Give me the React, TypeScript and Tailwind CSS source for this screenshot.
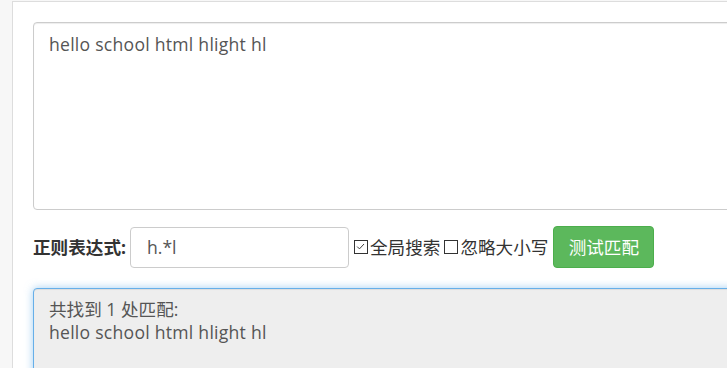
import React from "react";

export default function App() {
  const font = { fontFamily: '"Microsoft YaHei", "Open Sans", "Noto Sans CJK SC", sans-serif' };
  return (
    <div className="flex h-[368px] w-[727px] overflow-hidden bg-[#f7f7f7]" style={font}>
      <div className="ml-[12px] mt-[1px] flex-1 min-w-0 border-l border-t border-[#dddddd] bg-white pl-[20px] pt-[20px]">
        <div className="w-[720px] h-[188px] rounded-[4px] border border-[#cccccc] px-[15px] pt-[9px] text-[17.6px] leading-[24px] tracking-[0.25px] text-[#555555] shadow-[inset_0_1px_1px_rgba(0,0,0,0.075)]">
          hello school html hlight hl
        </div>
        <div className="mt-[16px] flex items-center h-[42px]">
          <span className="text-[17.6px] font-bold text-[#333333] mr-[4px]">正则表达式:</span>
          <div className="w-[219px] h-[41px] rounded-[4px] border border-[#cccccc] px-[16px] flex items-center text-[17.6px] text-[#555555]">
            h.*l
          </div>
          <span className="ml-[5px] flex items-center text-[17.6px] text-[#333333]">
            <span className="inline-block w-[14px] h-[14px] border border-[#333] relative mr-[2px]">
              <svg viewBox="0 0 14 14" className="absolute inset-0 w-[12px] h-[12px]">
                <path d="M2.5 6.5 L5.2 9.2 L10.5 3.5" fill="none" stroke="#333" strokeWidth="1.1" />
              </svg>
            </span>
            全局搜索
          </span>
          <span className="ml-[4px] flex items-center text-[17.6px] text-[#333333]">
            <span className="inline-block w-[14px] h-[14px] border border-[#333] mr-[2px]"></span>
            忽略大小写
          </span>
          <button className="ml-[5px] h-[42px] w-[101px] rounded-[4px] bg-[#5cb85c] border border-[#4cae4c] text-white text-[17.6px]">
            测试匹配
          </button>
        </div>
        <div className="mt-[20px] w-[720px] h-[120px] rounded-[4px] border border-[#66afe9] bg-[#eeeeee] px-[15px] pt-[9px] text-[17.6px] leading-[23px] text-[#555555] shadow-[inset_0_1px_1px_rgba(0,0,0,0.075),0_0_8px_rgba(102,175,233,0.6)]">
          <div>共找到 1 处匹配:</div>
          <div className="tracking-[0.25px]">hello school html hlight hl</div>
        </div>
      </div>
    </div>
  );
}
